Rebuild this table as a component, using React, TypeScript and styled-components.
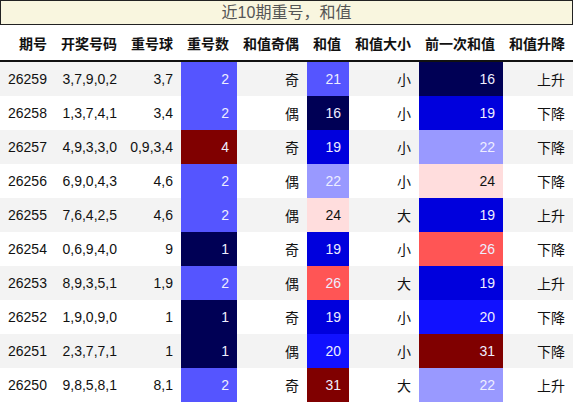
import styled, { createGlobalStyle } from "styled-components";

const GlobalStyle = createGlobalStyle`
  body {
    margin: 0;
    background: #fff;
    font-family: "Liberation Sans", "Noto Sans CJK SC", sans-serif;
  }
`;

const Table = styled.table`
  width: 573px;
  border-collapse: separate;
  border-spacing: 0;
  table-layout: fixed;
  font-size: 14px;
  color: #111;
`;

const Caption = styled.caption`
  height: 23px;
  line-height: 23px;
  border: 1px solid #222;
  background: #f9f6df;
  color: #555;
  font-size: 16px;
  text-align: center;
`;

const HeadCell = styled.th`
  height: 35px;
  padding: 0 8px 0 0;
  border-bottom: 2px solid #111;
  font-weight: bold;
  text-align: right;
  white-space: nowrap;
`;

const Row = styled.tr<{ $odd: boolean }>`
  background: ${(p) => (p.$odd ? "#f3f3f3" : "#fff")};
`;

const Cell = styled.td<{ $bg?: string; $fg?: string }>`
  height: 34px;
  padding: 0 8px 0 0;
  text-align: right;
  white-space: nowrap;
  background: ${(p) => p.$bg || "transparent"};
  color: ${(p) => p.$fg || "#111"};
`;

const FirstCell = styled(Cell)`
  text-align: left;
  padding-left: 8px;
`;

const widths = [55, 70, 56, 56, 70, 42, 70, 84, 70];
const heads = ["期号", "开奖号码", "重号球", "重号数", "和值奇偶", "和值", "和值大小", "前一次和值", "和值升降"];

const repeatColor: Record<number, string> = {
  1: "#000055",
  2: "#5555ff",
  4: "#800000",
};

const sumColor: Record<number, string> = {
  16: "#000055",
  19: "#0000dd",
  20: "#1111ff",
  21: "#5555ff",
  22: "#9999ff",
  24: "#ffdddd",
  26: "#ff5555",
  31: "#800000",
};

const textOn = (bg: string) => (bg === "#ffdddd" ? "#111" : "#eef");

type Draw = [string, string, string, number, string, number, string, number, string];

const rows: Draw[] = [
  ["26259", "3,7,9,0,2", "3,7", 2, "奇", 21, "小", 16, "上升"],
  ["26258", "1,3,7,4,1", "3,4", 2, "偶", 16, "小", 19, "下降"],
  ["26257", "4,9,3,3,0", "0,9,3,4", 4, "奇", 19, "小", 22, "下降"],
  ["26256", "6,9,0,4,3", "4,6", 2, "偶", 22, "小", 24, "下降"],
  ["26255", "7,6,4,2,5", "4,6", 2, "偶", 24, "大", 19, "上升"],
  ["26254", "0,6,9,4,0", "9", 1, "奇", 19, "小", 26, "下降"],
  ["26253", "8,9,3,5,1", "1,9", 2, "偶", 26, "大", 19, "上升"],
  ["26252", "1,9,0,9,0", "1", 1, "奇", 19, "小", 20, "下降"],
  ["26251", "2,3,7,7,1", "1", 1, "偶", 20, "小", 31, "下降"],
  ["26250", "9,8,5,8,1", "8,1", 2, "奇", 31, "大", 22, "上升"],
];

export default function App() {
  return (
    <>
      <GlobalStyle />
      <Table>
        <Caption>近10期重号，和值</Caption>
        <colgroup>
          {widths.map((w, i) => (
            <col key={i} style={{ width: w }} />
          ))}
        </colgroup>
        <thead>
          <tr>
            {heads.map((h) => (
              <HeadCell key={h}>{h}</HeadCell>
            ))}
          </tr>
        </thead>
        <tbody>
          {rows.map((r, i) => {
            const rc = repeatColor[r[3]];
            const sc = sumColor[r[5]];
            const pc = sumColor[r[7]];
            return (
              <Row key={r[0]} $odd={i % 2 === 0}>
                <FirstCell>{r[0]}</FirstCell>
                <Cell>{r[1]}</Cell>
                <Cell>{r[2]}</Cell>
                <Cell $bg={rc} $fg={textOn(rc)}>{r[3]}</Cell>
                <Cell>{r[4]}</Cell>
                <Cell $bg={sc} $fg={textOn(sc)}>{r[5]}</Cell>
                <Cell>{r[6]}</Cell>
                <Cell $bg={pc} $fg={textOn(pc)}>{r[7]}</Cell>
                <Cell>{r[8]}</Cell>
              </Row>
            );
          })}
        </tbody>
      </Table>
    </>
  );
}
